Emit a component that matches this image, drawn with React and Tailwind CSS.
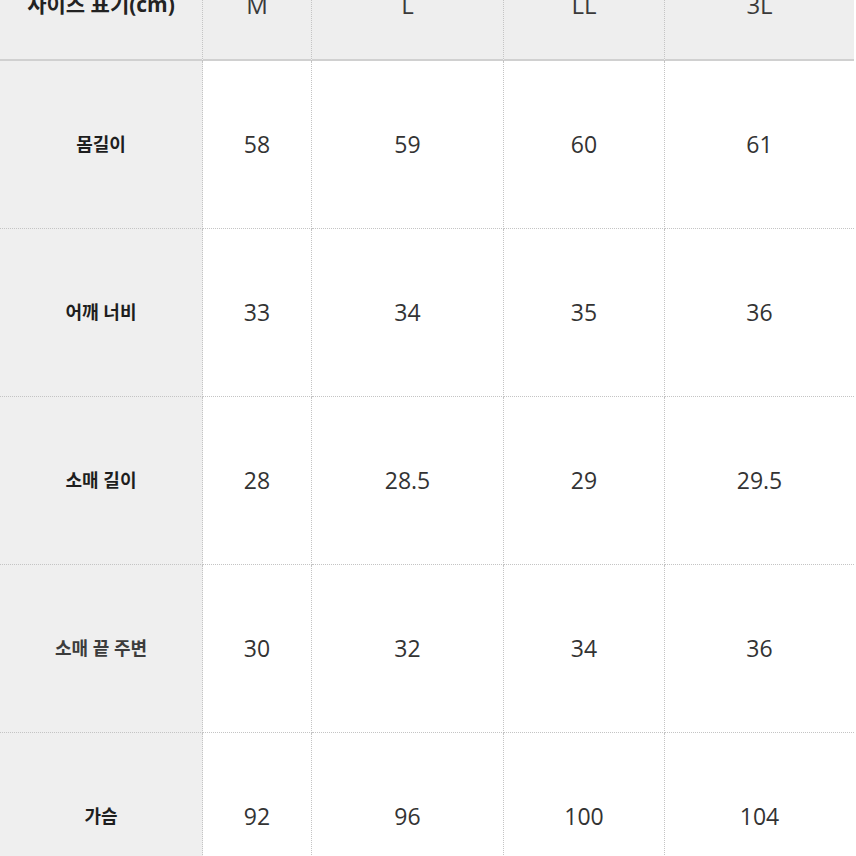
import React from 'react';

const SIZES = ['M', 'L', 'LL', '3L'];

const ROWS = [
  { label: '몸길이', values: ['58', '59', '60', '61'] },
  { label: '어깨 너비', values: ['33', '34', '35', '36'] },
  { label: '소매 길이', values: ['28', '28.5', '29', '29.5'] },
  { label: '소매 끝 주변', values: ['30', '32', '34', '36'], light: true },
  { label: '가슴', values: ['92', '96', '100', '104'] },
];

export default function App() {
  return (
    <div
      className="w-[856px] h-[856px] overflow-hidden bg-white"
      style={{ fontFamily: '"Open Sans", "Noto Sans CJK KR", sans-serif' }}
    >
      <div className="grid w-[854px] grid-cols-[203px_109px_192px_161px_189px] border-r-2 border-[#cdcdcd]">
        {/* header row - top is cropped off in the picture */}
        <div className="h-[61px] bg-[#eeeeee] border-r border-dotted border-[#c4c4c4] shadow-[inset_0_-2px_0_#d0d0d0] flex justify-center">
          <span className="-mt-[6px] leading-none text-[21px] font-bold text-[#222]">사이즈 표기(cm)</span>
        </div>
        {SIZES.map((s, i) => (
          <div
            key={s}
            className={`h-[61px] bg-[#eeeeee] shadow-[inset_0_-2px_0_#d0d0d0] flex justify-center ${
              i < SIZES.length - 1 ? 'border-r border-dotted border-[#c4c4c4]' : ''
            }`}
          >
            <span className="-mt-[7px] leading-none text-[24px] text-[#3a3a3a]">{s}</span>
          </div>
        ))}

        {/* data rows */}
        {ROWS.map((row) => (
          <React.Fragment key={row.label}>
            <div className="h-[168px] bg-[#efefef] border-r border-b border-dotted border-[#c4c4c4] flex items-center justify-center">
              <span
                className={`text-[18px] font-bold ${row.light ? 'text-[#3c3c3c]' : 'text-[#1e1e1e]'}`}
              >
                {row.label}
              </span>
            </div>
            {row.values.map((v, i) => (
              <div
                key={i}
                className={`h-[168px] bg-white border-b border-dotted border-[#c4c4c4] flex items-center justify-center ${
                  i < row.values.length - 1 ? 'border-r' : ''
                }`}
              >
                <span className="text-[23px] text-[#333]">{v}</span>
              </div>
            ))}
          </React.Fragment>
        ))}
      </div>
    </div>
  );
}
